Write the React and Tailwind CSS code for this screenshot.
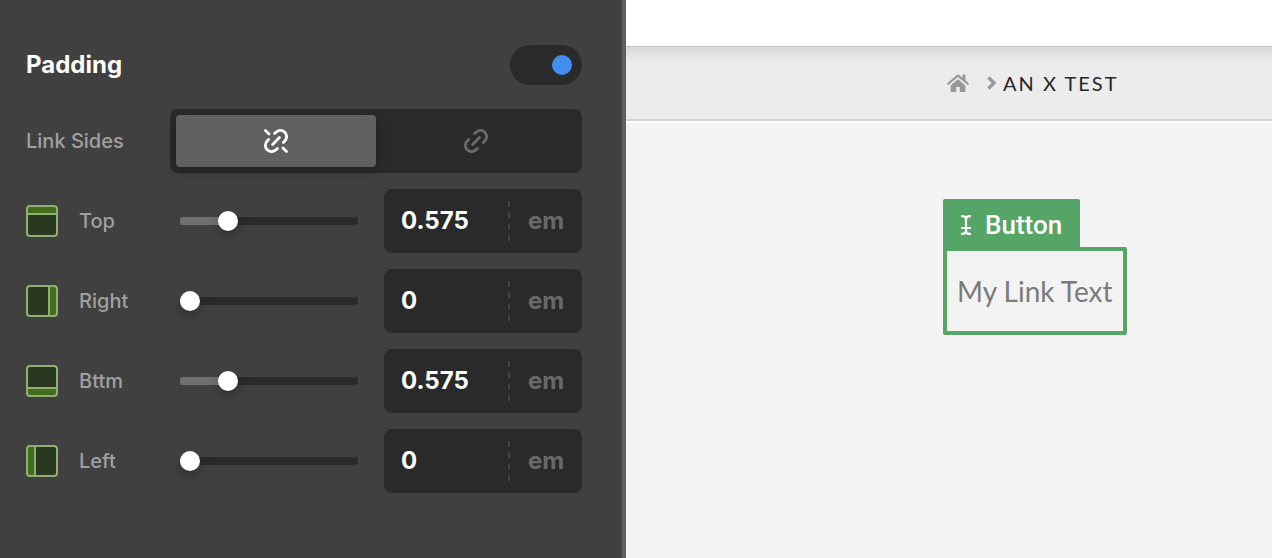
import React, { useState } from "react";

const sides = [
  { id: "top", label: "Top", line: "M2 9H30", fill: { x: 1, y: 1, width: 30, height: 8 } },
  { id: "right", label: "Right", line: "M23 2V30", fill: { x: 23, y: 1, width: 8, height: 30 } },
  { id: "bottom", label: "Bttm", line: "M2 23H30", fill: { x: 1, y: 23, width: 30, height: 8 } },
  { id: "left", label: "Left", line: "M9 2V30", fill: { x: 1, y: 1, width: 8, height: 30 } },
];

const SideIcon = ({ line, fill }) => (
  <svg width="32" height="32" viewBox="0 0 32 32" fill="none" aria-hidden="true">
    <rect x="1" y="1" width="30" height="30" rx="3" fill="#2b3821" />
    <rect {...fill} rx="2" fill="#416d1d" />
    <path d={line} stroke="#8fb070" strokeWidth="2" />
    <rect x="1" y="1" width="30" height="30" rx="3" stroke="#8fb070" strokeWidth="2" />
  </svg>
);

const LinkIcon = ({ broken }) => (
  <svg
    width="24"
    height="24"
    viewBox="0 0 24 24"
    fill="none"
    stroke="currentColor"
    strokeWidth="2.8"
    strokeLinecap="round"
    aria-hidden="true"
  >
    <path d="M8.6 15.4L15.4 8.6" />
    <path d="M10.6 4.6L12 3.2A6.2 6.2 0 0 1 20.8 12L19.4 13.4" />
    <path d="M13.4 19.4L12 20.8A6.2 6.2 0 0 1 3.2 12L4.6 10.6" />
    {broken && <path d="M1.5 1.5L5 5M19 19L22.5 22.5" />}
  </svg>
);

const HomeIcon = () => (
  <svg width="22" height="18" viewBox="0 0 22 18" fill="currentColor" aria-hidden="true">
    <path d="M11 5.2L3.6 11.4V17.2Q3.6 18 4.4 18H9.2V13H12.8V18H17.6Q18.4 18 18.4 17.2V11.4Z" />
    <path d="M.2 9.3L9.8 1.1Q11 .1 12.2 1.1L15.4 3.8V1.1Q15.4.6 15.9.6H18Q18.5.6 18.5 1.1V6.5L21.8 9.3Q22.1 9.6 21.8 9.9L21 10.8Q20.7 11.1 20.4 10.8L11 2.9L1.6 10.8Q1.3 11.1 1 10.8L.2 9.9Q-.1 9.6.2 9.3Z" />
  </svg>
);

const TextCursorIcon = () => (
  <svg
    width="10"
    height="20"
    viewBox="0 0 10 20"
    fill="none"
    stroke="currentColor"
    strokeWidth="2.2"
    aria-hidden="true"
  >
    <path d="M0 1.1H1.5Q5 1.1 5 4.5Q5 1.1 8.5 1.1H10M0 18.9H1.5Q5 18.9 5 15.5Q5 18.9 8.5 18.9H10M5 4V16M0 13H10" />
  </svg>
);

const SideRow = ({ side, value, onChange }) => {
  const percent = (value / 2.36) * 100;
  const fillStop = `calc(10px + (100% - 20px) * ${percent / 100})`;

  return (
    <div className="flex h-16 items-center">
      <label
        htmlFor={side.id}
        className="flex w-36 shrink-0 items-center gap-[21px] text-xl font-medium text-[#a0a0a0]"
      >
        <SideIcon line={side.line} fill={side.fill} />
        {side.label}
      </label>
      <input
        id={side.id}
        type="range"
        min="0"
        max="2.36"
        step="0.005"
        value={value}
        onChange={(e) => onChange(e.target.value)}
        style={{ background: `linear-gradient(to right, #707070 ${fillStop}, #2a2a2a ${fillStop})` }}
        className="mr-[26px] ml-2.5 h-2 min-w-0 flex-1 appearance-none rounded-xs [&::-webkit-slider-thumb]:size-5 [&::-webkit-slider-thumb]:appearance-none [&::-webkit-slider-thumb]:rounded-full [&::-webkit-slider-thumb]:bg-white [&::-webkit-slider-thumb]:shadow-[0_6px_12px_rgba(0,0,0,0.25)]"
      />
      <div className="flex h-16 w-[198px] shrink-0 items-center rounded-lg bg-[#2a2a2a] text-2xl font-bold">
        <input
          type="text"
          aria-label={`${side.label} value`}
          value={value}
          onChange={(e) => onChange(e.target.value)}
          className="min-w-0 flex-1 bg-transparent pl-[17px] text-white outline-none"
        />
        <button type="button" className="h-10 w-[74px] border-l-2 border-dashed border-[#444444] text-[#6a6a6a]">
          em
        </button>
      </div>
    </div>
  );
};

const PaddingPanel = () => {
  const [enabled, setEnabled] = useState(true);
  const [linked, setLinked] = useState(false);
  const [values, setValues] = useState({
    top: "0.575",
    right: "0",
    bottom: "0.575",
    left: "0",
  });

  const handleChange = (id, value) => {
    setValues((prev) =>
      linked ? { top: value, right: value, bottom: value, left: value } : { ...prev, [id]: value }
    );
  };

  return (
    <section className="w-[626px] shrink-0 border-r-4 border-[#5f5f5f] bg-[#404040] pt-[45px] pr-10 pb-16 pl-[26px] font-['Inter',sans-serif]">
      <div className="flex h-10 items-center justify-between">
        <label htmlFor="padding-enabled" className="text-2xl font-bold text-white">
          Padding
        </label>
        <input
          id="padding-enabled"
          type="checkbox"
          role="switch"
          checked={enabled}
          onChange={(e) => setEnabled(e.target.checked)}
          className="flex h-10 w-[72px] appearance-none items-center rounded-full bg-[#2a2a2a] px-2.5 before:size-5 before:rounded-full before:bg-[#6a6a6a] checked:justify-end checked:before:bg-[#418eee]"
        />
      </div>

      <div className="mt-6 flex flex-col gap-4">
        <div className="flex items-center">
          <span id="link-sides" className="w-36 shrink-0 text-xl font-medium text-[#a0a0a0]">
            Link Sides
          </span>
          <div
            role="group"
            aria-labelledby="link-sides"
            className="flex h-16 flex-1 rounded-lg bg-[#2a2a2a] p-1.5 text-[#6a6a6a]"
          >
            <button
              type="button"
              aria-label="Unlinked"
              aria-pressed={!linked}
              onClick={() => setLinked(false)}
              className="flex flex-1 items-center justify-center rounded-sm aria-pressed:bg-[#606060] aria-pressed:text-white aria-pressed:shadow-[0_4px_12px_rgba(0,0,0,0.25)]"
            >
              <LinkIcon broken />
            </button>
            <button
              type="button"
              aria-label="Linked"
              aria-pressed={linked}
              onClick={() => setLinked(true)}
              className="flex flex-1 items-center justify-center rounded-sm aria-pressed:bg-[#606060] aria-pressed:text-white aria-pressed:shadow-[0_4px_12px_rgba(0,0,0,0.25)]"
            >
              <LinkIcon />
            </button>
          </div>
        </div>

        {sides.map((side) => (
          <SideRow
            key={side.id}
            side={side}
            value={values[side.id]}
            onChange={(value) => handleChange(side.id, value)}
          />
        ))}
      </div>
    </section>
  );
};

const Preview = () => (
  <main className="min-w-0 flex-1 bg-[#f3f3f3] font-['Lato',sans-serif]">
    <header className="h-[46px] bg-white" />
    <nav
      aria-label="Breadcrumb"
      className="flex h-[75px] items-center border-t border-b-2 border-t-[#c4c4c4] border-b-[#d2d2d2] bg-[#ececec] bg-linear-to-b from-[#d8d8d8] to-[#ececec] to-20% pl-[321px] text-xl text-[#272727] shadow-[0_2px_0_#ffffff]"
    >
      <a href="#home" aria-label="Home" className="text-[#999999]">
        <HomeIcon />
      </a>
      <svg width="10" height="14" viewBox="0 0 10 14" fill="none" className="mr-1.5 ml-[18px]" aria-hidden="true">
        <path d="M1.5 1.5L7 7L1.5 12.5" stroke="#999999" strokeWidth="3.4" />
      </svg>
      <span className="tracking-widest whitespace-nowrap">AN X TEST</span>
    </nav>

    <div className="flex flex-col items-start pt-[78px] pl-[317px]">
      <div className="flex h-12 items-center gap-3.5 rounded-t-xs bg-[#54a566] px-[18px] pt-1 font-['Roboto',sans-serif] text-[26px] font-medium text-white">
        <TextCursorIcon />
        Button
      </div>
      <a
        href="#link"
        className="flex h-[88px] items-center rounded-r-xs rounded-bl-xs border-4 border-[#54a566] px-2.5 text-[28px] whitespace-nowrap text-[#7b7b7b]"
      >
        My Link Text
      </a>
    </div>
  </main>
);

const App = () => {
  return (
    <div className="flex min-h-screen">
      <PaddingPanel />
      <Preview />
    </div>
  );
};

export default App;
